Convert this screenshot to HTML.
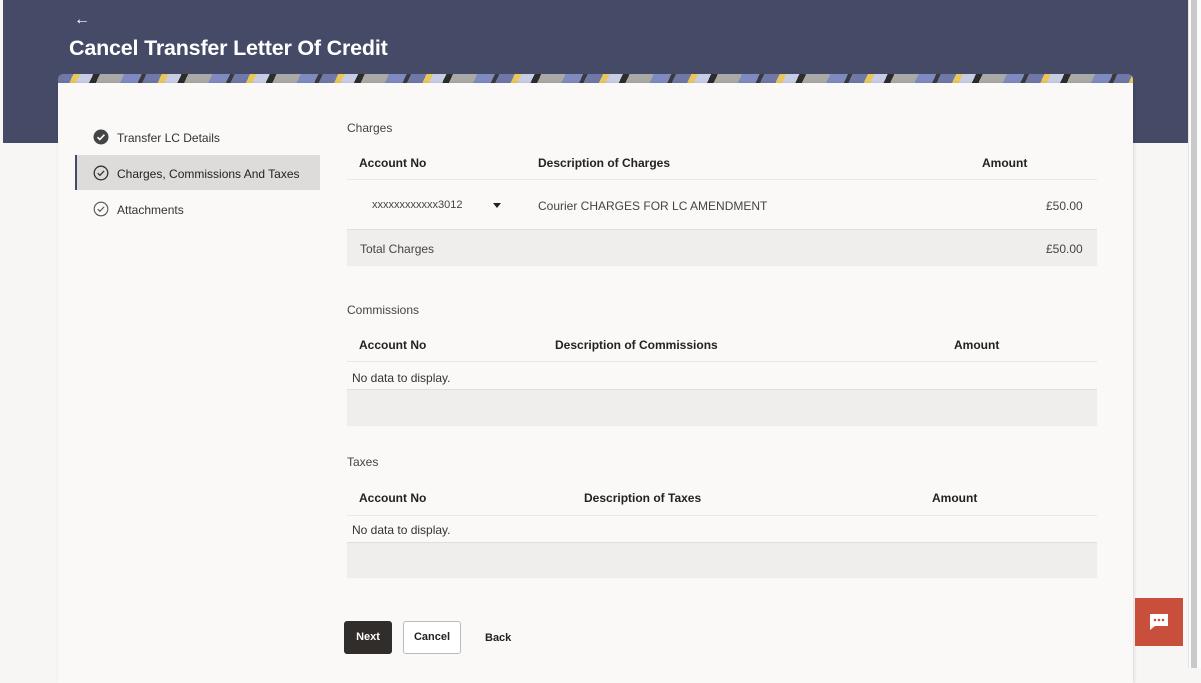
<!DOCTYPE html>
<html><head><meta charset="utf-8"><style>
*{margin:0;padding:0;box-sizing:border-box}
body{width:1201px;height:668px;overflow:hidden;background:#f7f6f4;font-family:"Liberation Sans",sans-serif;color:#2b2b2b;position:relative}
.a{position:absolute}
.hdr{left:3px;top:0;width:1185px;height:143px;background:#454a67}
.sb{left:1188px;top:0;width:13px;height:668px;background:#fbfbfb;border-left:1px solid #e2e2e2}
.sb div{position:absolute;left:2px;top:0;width:6px;height:668px;background:#c9c9c9}
.strip{left:58px;top:74px;width:1075px;height:10px;border-radius:5px 5px 0 0;overflow:hidden;
background:linear-gradient(90deg,rgba(69,74,103,.0) 0,rgba(69,74,103,0) 100%),repeating-linear-gradient(115deg,#6f78a6 0 14px,#e9c75a 14px 20px,#c8cde6 20px 32px,#2c2c2c 32px 38px,#a9a9a6 38px 60px,#7f8bc0 60px 76px,#3a3a3a 76px 80px)}
.card{left:58px;top:83px;width:1075px;height:600px;background:#faf9f7;box-shadow:1px 0 3px rgba(0,0,0,.12)}
.t{font-size:12px;white-space:nowrap}
.b{font-weight:bold;font-size:12px;white-space:nowrap;color:#222}
.line{height:1px;background:#e8e7e5}
.grey{background:#efeeec}
.step{font-size:12px;color:#333}
</style></head><body>
<div class="a hdr"></div>
<div class="a sb"><div></div></div>
<div class="a" style="left:74px;top:11px;color:#fff;font-size:16px">&#8592;</div>
<div class="a" style="left:69px;top:36px;color:#fff;font-size:21.5px;font-weight:bold;letter-spacing:-0.2px">Cancel Transfer Letter Of Credit</div>
<div class="a strip"></div>
<div class="a card"></div>

<svg class="a" style="left:93px;top:129px" width="16" height="16"><circle cx="8" cy="8" r="7.5" fill="#444"/><path d="M4.5 8.2l2.3 2.3 4.6-4.8" stroke="#fff" stroke-width="1.6" fill="none"/></svg>
<div class="a step" style="left:117px;top:131px">Transfer LC Details</div>
<div class="a" style="left:75px;top:155px;width:245px;height:35px;background:#dedcda;border-left:2px solid #454a67"></div>
<svg class="a" style="left:93px;top:165px" width="16" height="16"><circle cx="8" cy="8" r="6.8" fill="none" stroke="#333" stroke-width="1.3"/><path d="M4.8 8.2l2.1 2.1 4.2-4.4" stroke="#333" stroke-width="1.3" fill="none"/></svg>
<div class="a step" style="left:117px;top:167px;color:#222">Charges, Commissions And Taxes</div>
<svg class="a" style="left:93px;top:201px" width="16" height="16"><circle cx="8" cy="8" r="6.8" fill="none" stroke="#555" stroke-width="1.1"/><path d="M4.8 8.2l2.1 2.1 4.2-4.4" stroke="#555" stroke-width="1.1" fill="none"/></svg>
<div class="a step" style="left:117px;top:203px">Attachments</div>

<div class="a t" style="left:347px;top:121px;color:#444">Charges</div>
<div class="a b" style="left:359px;top:156px">Account No</div>
<div class="a b" style="left:538px;top:156px">Description of Charges</div>
<div class="a b" style="left:982px;top:156px">Amount</div>
<div class="a line" style="left:347px;top:179px;width:750px"></div>
<div class="a t" style="left:372px;top:199px;font-size:11px;color:#444">xxxxxxxxxxxx3012</div>
<div class="a" style="left:493px;top:203px;width:0;height:0;border-left:4px solid transparent;border-right:4px solid transparent;border-top:5px solid #222"></div>
<div class="a t" style="left:538px;top:199px;color:#444">Courier CHARGES FOR LC AMENDMENT</div>
<div class="a t" style="left:1046px;top:199px;color:#444">£50.00</div>
<div class="a line" style="left:347px;top:229px;width:750px;background:#e0dfdd"></div>
<div class="a grey" style="left:347px;top:230px;width:750px;height:36px"></div>
<div class="a t" style="left:360px;top:242px;color:#444">Total Charges</div>
<div class="a t" style="left:1046px;top:242px;color:#444">£50.00</div>

<div class="a t" style="left:347px;top:303px;color:#444">Commissions</div>
<div class="a b" style="left:359px;top:338px">Account No</div>
<div class="a b" style="left:555px;top:338px">Description of Commissions</div>
<div class="a b" style="left:954px;top:338px">Amount</div>
<div class="a line" style="left:347px;top:361px;width:750px"></div>
<div class="a t" style="left:352px;top:371px;color:#333">No data to display.</div>
<div class="a line" style="left:347px;top:389px;width:750px;background:#e0dfdd"></div>
<div class="a grey" style="left:347px;top:390px;width:750px;height:36px"></div>

<div class="a t" style="left:347px;top:455px;color:#444">Taxes</div>
<div class="a b" style="left:359px;top:491px">Account No</div>
<div class="a b" style="left:584px;top:491px">Description of Taxes</div>
<div class="a b" style="left:932px;top:491px">Amount</div>
<div class="a line" style="left:347px;top:515px;width:750px"></div>
<div class="a t" style="left:352px;top:523px;color:#333">No data to display.</div>
<div class="a line" style="left:347px;top:542px;width:750px;background:#e0dfdd"></div>
<div class="a grey" style="left:347px;top:543px;width:750px;height:35px"></div>

<div class="a" style="left:344px;top:621px;width:48px;height:33px;background:#312d2a;border-radius:3px;color:#fff;font-size:11px;font-weight:bold;text-align:center;line-height:33px">Next</div>
<div class="a" style="left:403px;top:621px;width:58px;height:33px;border:1px solid #bdbbb8;border-radius:3px;background:#fff;color:#222;font-size:11px;font-weight:bold;text-align:center;line-height:31px">Cancel</div>
<div class="a" style="left:485px;top:632px;font-size:11px;font-weight:bold;color:#222">Back</div>

<div class="a" style="left:1135px;top:598px;width:48px;height:48px;background:#c74f3b"></div>
<svg class="a" style="left:1149px;top:613px" width="20" height="18"><path d="M1 1h18v12H6l-5 4z" fill="#fff"/><circle cx="6" cy="7" r="1.3" fill="#c74f3b"/><circle cx="10" cy="7" r="1.3" fill="#c74f3b"/><circle cx="14" cy="7" r="1.3" fill="#c74f3b"/></svg>
</body></html>
